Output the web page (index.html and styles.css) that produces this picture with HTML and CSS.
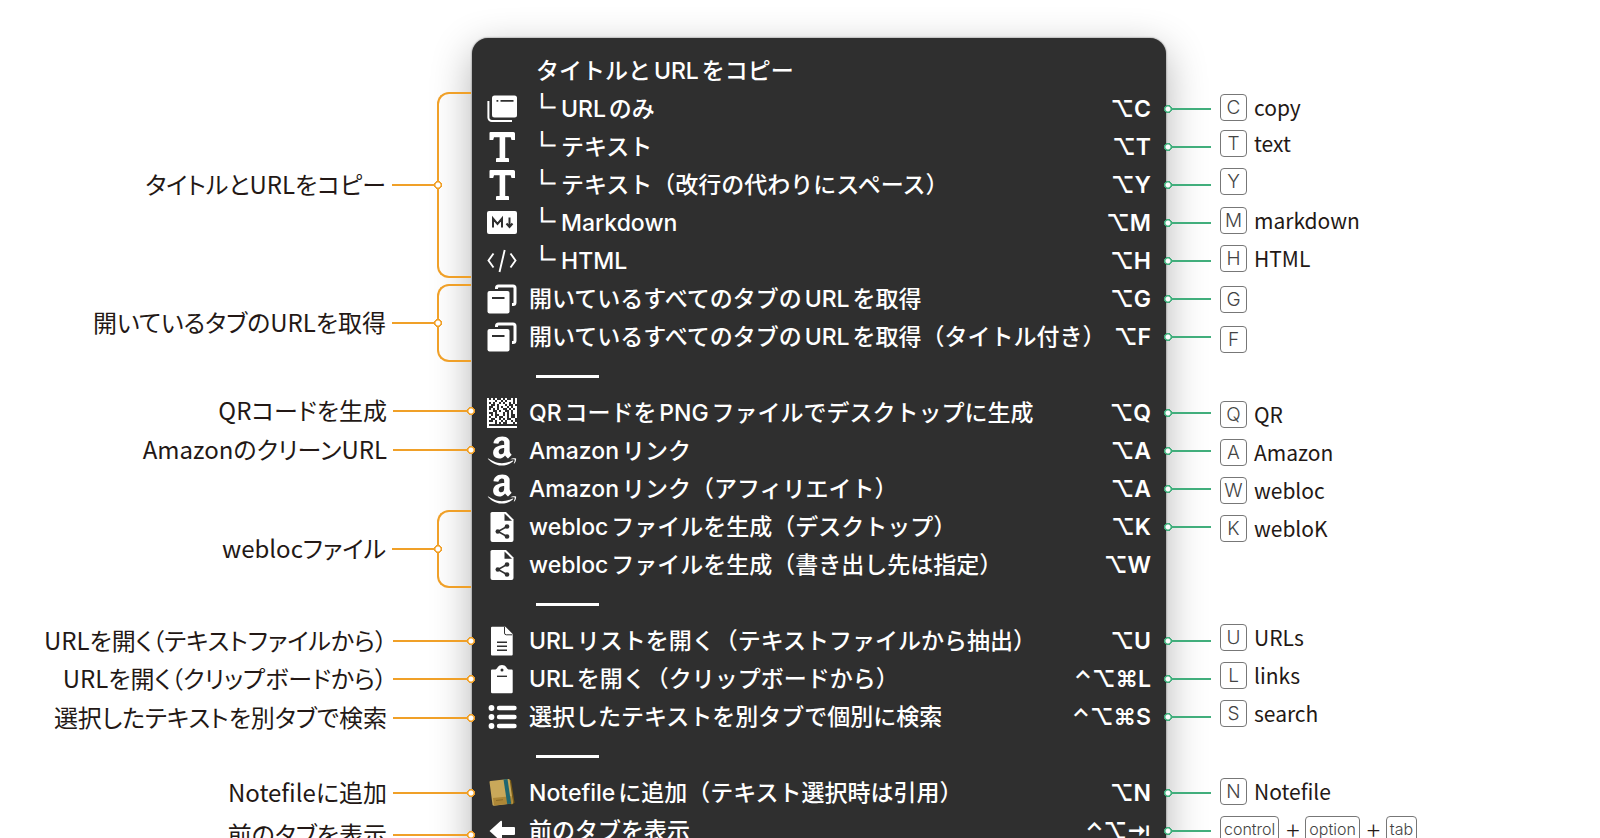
FILE: index.html
```html
<!DOCTYPE html>
<html lang="ja">
<head>
    <meta charset="UTF-8">
    <meta name="viewport" content="width=device-width, initial-scale=1.0">
    <title>ショートカット一覧</title>
    <link rel="stylesheet" href="styles.css">
</head>
<body>
    <!-- Shared icons -->
    <svg class="sprite" aria-hidden="true">
        <symbol id="icon-window" viewBox="0 0 30 30">
            <path d="M1.400 7v16.500a3.500 3.500 0 0 0 3.500 3.500H25" fill="none" stroke="#fff" stroke-width="2"/>
            <rect x="5" y="1.500" width="25" height="22" rx="2.500" fill="#fff"/>
            <path d="M9.500 6.800h1.800M13.500 6.800h13" stroke="#2f2f2f" stroke-width="1.700"/>
        </symbol>
        <symbol id="icon-text" viewBox="0 0 30 30">
            <path d="M3.500 0h23q1.500 0 1.500 1.500V8h-3.500l-.8-2.700h-5.500V26H21q1 0 1 1v3H9v-3q0-1 1-1h2.600V5.300H7L6.200 8H2.500V1Q2.500 0 3.500 0z" fill="#fff"/>
        </symbol>
        <symbol id="icon-markdown" viewBox="0 0 30 30">
            <rect x="0" y="3" width="30" height="23" rx="2" fill="#fff"/>
            <path d="M6 19.500v-9l4.500 5.500 4.500-5.500v9M22.500 9.500V18M19.500 15.500l3 3.500 3-3.500" fill="none" stroke="#2f2f2f" stroke-width="2"/>
        </symbol>
        <symbol id="icon-code" viewBox="0 0 30 30">
            <path d="M6.500 7.500 1.500 14.500l5 7M23.500 7.500l5 7-5 7M17.700 4l-5.200 22" fill="none" stroke="#fff" stroke-width="1.900"/>
        </symbol>
        <symbol id="icon-tabs" viewBox="0 0 30 30">
            <path d="M9.500 5V4q0-2 2-2H26q2 0 2 2v14.500q0 2-2 2h-1" fill="none" stroke="#fff" stroke-width="3"/>
            <rect x=".5" y="7" width="22" height="22.500" rx="2" fill="#fff"/>
            <path d="M5 14h12.500" stroke="#2f2f2f" stroke-width="2"/>
        </symbol>
        <symbol id="icon-qr" viewBox="0 0 30 30">
            <path d="M1 0v29h29" fill="none" stroke="#fff" stroke-width="2"/>
            <g stroke="#fff" stroke-width="2">
                <path d="M4 1h26" stroke-dasharray="2 2 2 4"/>
                <path d="M2 3h28" stroke-dasharray="6 2 4 2 2 2"/>
                <path d="M4 5h26" stroke-dasharray="2 2 4 2"/>
                <path d="M2 7h28" stroke-dasharray="2 4 2 2 6 2"/>
                <path d="M6 9h24" stroke-dasharray="4 2 2 2"/>
                <path d="M4 11h26" stroke-dasharray="2 2 2 2 4 4"/>
                <path d="M2 13h28" stroke-dasharray="4 4 2 2"/>
                <path d="M6 15h24" stroke-dasharray="2 2 6 2 2 2"/>
                <path d="M2 17h28" stroke-dasharray="2 2 2 4 4 2"/>
                <path d="M4 19h26" stroke-dasharray="4 2 2 4"/>
                <path d="M2 21h28" stroke-dasharray="2 4 4 2 2 2"/>
                <path d="M6 23h24" stroke-dasharray="2 2 4 2"/>
                <path d="M2 25h28" stroke-dasharray="6 2 2 2 2 4"/>
            </g>
        </symbol>
        <symbol id="icon-amazon" viewBox="0 26 448 460">
            <path d="M257.200 162.700c-48.700 1.800-169.500 15.500-169.500 117.500 0 109.500 138.300 114 183.500 43.200 6.500 10.200 35.400 37.500 45.300 46.800l56.800-56S341 288.900 341 261.400V114.300C341 89 316.500 32 228.700 32 140.700 32 94 87 94 136.300l73.500 6.800c16.300-49.500 54.200-49.500 54.200-49.500 40.700-.1 35.500 29.800 35.500 69.100zm0 86.800c0 80-84.200 68-84.200 17.200 0-47.200 50.500-56.700 84.200-57.800v40.600zm136 163.500c-7.700 10-70 67-174.500 67S34.200 408.500 9.700 379c-6.800-7.700 1-11.300 5.500-8.300C88.500 415.200 203 488.500 387.700 401c7.500-3.700 13.300 2 5.500 12zm39.800 2.200c-6.500 15.800-16 26.800-21.200 31-5.500 4.500-9.500 2.700-6.500-3.800s19.300-46.500 12.700-55c-6.500-8.300-37-4.300-48-3.200-10.800 1-13 2-14-.3-2.300-5.700 21.700-15.500 37.500-17.500 15.700-1.800 41-.8 46 5.700 3.700 5.100 0 27.100-6.500 43.100z" fill="#fff"/>
        </symbol>
        <symbol id="icon-share" viewBox="0 0 30 30">
            <path d="M5 0h14l7.500 7.500V28q0 2-2 2H5.500q-2 0-2-2V1.500Q3.500 0 5 0z" fill="#fff"/>
            <path d="M17.500 1.500v7.300h7.500z" fill="#2f2f2f"/>
            <path d="M20 14.500 11 19.500l9 5" fill="none" stroke="#2f2f2f" stroke-width="1.500"/>
            <g fill="#2f2f2f"><circle cx="20" cy="14.500" r="2.300"/><circle cx="10.800" cy="19.500" r="2.300"/><circle cx="20" cy="24.500" r="2.300"/></g>
        </symbol>
        <symbol id="icon-file" viewBox="0 0 30 30">
            <path d="M5 .7h13.500L25.700 8v20.500q0 1-1 1H5q-1 0-1-1V1.700q0-1 1-1z" fill="#fff"/>
            <path d="M17.500 1v6q0 1.800 1.800 1.800h6" fill="none" stroke="#2f2f2f" stroke-width="1"/>
            <path d="M10 16.200h10M10 20.200h10M10 24.200h10" stroke="#2f2f2f" stroke-width="1.500"/>
        </symbol>
        <symbol id="icon-clipboard" viewBox="0 0 30 30">
            <path d="M5 5.500h3.500Q10 4.800 11 2.800 12 1 15 1t4 1.800q1 2 2.500 2.700h3.200q1 0 1 1V28q0 1.300-1.300 1.300H5.300Q4 29.300 4 28V6.500q0-1 1-1z" fill="#fff"/>
            <circle cx="15" cy="6" r="1.500" fill="#2f2f2f"/>
            <path d="M10 12.300h10" stroke="#2f2f2f" stroke-width="1.400"/>
        </symbol>
        <symbol id="icon-list" viewBox="0 0 30 30">
            <g fill="#fff">
                <circle cx="4.500" cy="6" r="2.900"/><circle cx="4.500" cy="15" r="2.900"/><circle cx="4.500" cy="24" r="2.900"/>
            </g>
            <path d="M12 6h15.500M12 15h15.500M12 24h15.500" stroke="#fff" stroke-width="4.400" stroke-linecap="round"/>
        </symbol>
        <symbol id="icon-book" viewBox="0 0 30 30">
            <path d="M22 1.500l2 .8 3.500 22.500-3 2.200z" fill="#7a5c17"/>
            <path d="M3.500 3 21.500 1q1 0 1.200 1L26 25.500 7 27.700q-1.300 0-1.500-1L2.500 4q0-.9 1-1z" fill="#c9a85a"/>
            <path d="M6 20l18.500-2 1.200 7.500L7 27.600z" fill="#ad8737"/>
            <path d="M16.500 1.600l4-.5 3.700 24.600-4 .4z" fill="#1f6670"/>
            <path d="M9 22.500l7-.8" stroke="#8d6b27"/>
        </symbol>
        <symbol id="icon-back" viewBox="0 0 30 30">
            <path d="M2.500 15 13.500 5q1.500-1 1.500 1v5h12q1 0 1 1v6q0 1-1 1H15v5q0 2-1.500 1z" fill="#fff"/>
        </symbol>
    </svg>

    <main class="sheet">
        <!-- Left Section: descriptions -->
        <ul class="notes">
            <li class="note group r1"><span>タイトルとURLをコピー</span></li>
            <li class="note group r2"><span>開いているタブのURLを取得</span></li>
            <li class="note r3"><span>QRコードを生成</span></li>
            <li class="note r4"><span>AmazonのクリーンURL</span></li>
            <li class="note group r5"><span>weblocファイル</span></li>
            <li class="note r6"><span>URLを開く（テキストファイルから）</span></li>
            <li class="note r7"><span>URLを開く（クリップボードから）</span></li>
            <li class="note r8"><span>選択したテキストを別タブで検索</span></li>
            <li class="note r9"><span>Notefileに追加</span></li>
            <li class="note r10"><span>前のタブを表示</span></li>
        </ul>

        <!-- Menu -->
        <ul class="menu">
            <li><button class="item heading" type="button"><span class="label">タイトルとURLをコピー</span></button></li>
            <li><button class="item" type="button"><svg class="icon"><use href="#icon-window"/></svg><span class="label"><span class="branch">└</span>URLのみ</span><kbd>⌥C</kbd></button></li>
            <li><button class="item" type="button"><svg class="icon"><use href="#icon-text"/></svg><span class="label"><span class="branch">└</span>テキスト</span><kbd>⌥T</kbd></button></li>
            <li><button class="item" type="button"><svg class="icon"><use href="#icon-text"/></svg><span class="label"><span class="branch">└</span>テキスト（改行の代わりにスペース）</span><kbd>⌥Y</kbd></button></li>
            <li><button class="item" type="button"><svg class="icon"><use href="#icon-markdown"/></svg><span class="label"><span class="branch">└</span>Markdown</span><kbd>⌥M</kbd></button></li>
            <li><button class="item" type="button"><svg class="icon"><use href="#icon-code"/></svg><span class="label"><span class="branch">└</span>HTML</span><kbd>⌥H</kbd></button></li>
            <li><button class="item" type="button"><svg class="icon"><use href="#icon-tabs"/></svg><span class="label">開いているすべてのタブのURLを取得</span><kbd>⌥G</kbd></button></li>
            <li><button class="item" type="button"><svg class="icon"><use href="#icon-tabs"/></svg><span class="label">開いているすべてのタブのURLを取得（タイトル付き）</span><kbd>⌥F</kbd></button></li>
            <li class="separator"><hr></li>
            <li><button class="item" type="button"><svg class="icon"><use href="#icon-qr"/></svg><span class="label">QRコードをPNGファイルでデスクトップに生成</span><kbd>⌥Q</kbd></button></li>
            <li><button class="item" type="button"><svg class="icon"><use href="#icon-amazon"/></svg><span class="label">Amazonリンク</span><kbd>⌥A</kbd></button></li>
            <li><button class="item" type="button"><svg class="icon"><use href="#icon-amazon"/></svg><span class="label">Amazonリンク（アフィリエイト）</span><kbd>⌥A</kbd></button></li>
            <li><button class="item" type="button"><svg class="icon"><use href="#icon-share"/></svg><span class="label">weblocファイルを生成（デスクトップ）</span><kbd>⌥K</kbd></button></li>
            <li><button class="item" type="button"><svg class="icon"><use href="#icon-share"/></svg><span class="label">weblocファイルを生成（書き出し先は指定）</span><kbd>⌥W</kbd></button></li>
            <li class="separator"><hr></li>
            <li><button class="item" type="button"><svg class="icon"><use href="#icon-file"/></svg><span class="label">URLリストを開く（テキストファイルから抽出）</span><kbd>⌥U</kbd></button></li>
            <li><button class="item" type="button"><svg class="icon"><use href="#icon-clipboard"/></svg><span class="label">URLを開く（クリップボードから）</span><kbd>⌃⌥⌘L</kbd></button></li>
            <li><button class="item" type="button"><svg class="icon"><use href="#icon-list"/></svg><span class="label">選択したテキストを別タブで個別に検索</span><kbd>⌃⌥⌘S</kbd></button></li>
            <li class="separator"><hr></li>
            <li><button class="item" type="button"><svg class="icon"><use href="#icon-book"/></svg><span class="label">Notefileに追加（テキスト選択時は引用）</span><kbd>⌥N</kbd></button></li>
            <li><button class="item" type="button"><svg class="icon"><use href="#icon-back"/></svg><span class="label">前のタブを表示</span><kbd>⌃⌥⇥</kbd></button></li>
        </ul>

        <!-- Right Section: key hints -->
        <div class="hints">
            <div class="pins">
                <i class="pin"></i><i class="pin"></i><i class="pin"></i><i class="pin"></i>
                <i class="pin"></i><i class="pin"></i><i class="pin"></i><i></i>
                <i class="pin"></i><i class="pin"></i><i class="pin"></i><i class="pin"></i>
                <i></i><i></i>
                <i class="pin"></i><i class="pin"></i><i class="pin"></i><i></i>
                <i class="pin"></i><i class="pin"></i>
            </div>
            <ul class="keys">
                <li class="k1"><kbd>C</kbd>copy</li>
                <li class="k2"><kbd>T</kbd>text</li>
                <li class="k3"><kbd>Y</kbd></li>
                <li class="k4"><kbd>M</kbd>markdown</li>
                <li class="k5"><kbd>H</kbd>HTML</li>
                <li class="k6"><kbd>G</kbd></li>
                <li class="k7"><kbd>F</kbd></li>
                <li class="k8"><kbd>Q</kbd>QR</li>
                <li class="k9"><kbd>A</kbd>Amazon</li>
                <li class="k10"><kbd>W</kbd>webloc</li>
                <li class="k11"><kbd>K</kbd>webloK</li>
                <li class="k12"><kbd>U</kbd>URLs</li>
                <li class="k13"><kbd>L</kbd>links</li>
                <li class="k14"><kbd>S</kbd>search</li>
                <li class="k15"><kbd>N</kbd>Notefile</li>
                <li class="k16 combo"><kbd>control</kbd><span class="plus">+</span><kbd>option</kbd><span class="plus">+</span><kbd>tab</kbd></li>
            </ul>
        </div>
    </main>
</body>
</html>
```
FILE: styles.css
```css
* {
    box-sizing: border-box;
}
body {
    margin: 0;
    background-color: #fff;
    color: #231815;
    font-family: "Noto Sans CJK JP", sans-serif;
    font-size: 24px;
}
ul {
    list-style: none;
    margin: 0;
    padding: 0;
}
.sprite {
    display: none;
}
.sheet {
    display: grid;
    grid-template-columns: minmax(0, 472fr) minmax(0, 694fr) minmax(0, 434fr);
    align-items: start;
    height: 100vh;
    overflow: hidden;
}

/* Left descriptions */
.notes {
    position: relative;
    z-index: 1;
    display: grid;
    grid-template-rows: 186px 6px 78px 30px 38px 40px 40px 78px 34px 38px 38px 40px 36px 38px 46px;
    padding-top: 92px;
    font-feature-settings: "palt";
}
.note {
    display: grid;
    grid-template-columns: 1fr 82px;
    column-gap: 6px;
    align-items: center;
    margin-right: -3px;
    line-height: 30px;
    text-align: right;
    white-space: nowrap;
}
.note span {
    padding-bottom: 2px;
}
.note::after {
    content: "";
    height: 8px;
    background:
        radial-gradient(circle at calc(100% - 4px) 4px, #fff 2px, #f0a028 3px, #f0a028 4px, transparent 4px),
        linear-gradient(#f0a028, #f0a028) 0 3px / 76px 2px no-repeat;
}
.note.group {
    grid-template-columns: 1fr 50px 29px;
    column-gap: 0;
    margin-right: 1px;
}
.note.group span {
    padding-right: 6px;
}
.note.group::before {
    content: "";
    grid-column: 3;
    grid-row: 1;
    align-self: stretch;
    margin-left: -5px;
    border: 2px solid #f0a028;
    border-right: 0;
    border-radius: 12px 0 0 12px;
}
.note.group::after {
    grid-column: 2;
    grid-row: 1;
    z-index: 1;
    background:
        radial-gradient(circle at calc(100% - 4px) 4px, #fff 2px, #f0a028 3px, #f0a028 4px, transparent 4px),
        linear-gradient(#f0a028, #f0a028) 0 3px / 43px 2px no-repeat;
}
.r1 { grid-row: 1; }
.r2 { grid-row: 3; }
.r3 { grid-row: 5; }
.r4 { grid-row: 6; }
.r5 { grid-row: 8; }
.r6 { grid-row: 10; }
.r7 { grid-row: 11; }
.r8 { grid-row: 12; }
.r9 { grid-row: 14; }
.r10 { grid-row: 15; }

/* Menu */
.menu {
    margin-top: 38px;
    padding: 14px 15px;
    background-color: #2f2f2f;
    border-radius: 16px;
    box-shadow: 0 0 2px rgba(0, 0, 0, 0.6), 0 12px 40px rgba(0, 0, 0, 0.3);
}
.item {
    display: flex;
    align-items: center;
    gap: 12px;
    width: 100%;
    height: 38px;
    padding: 0;
    border: 0;
    background: none;
    color: #fff;
    font-family: Inter, "Noto Sans CJK JP", sans-serif;
    font-size: 23px;
    font-weight: 500;
    line-height: 30px;
    text-align: left;
    text-autospace: normal;
    white-space: nowrap;
}
.heading {
    padding-left: 49px;
}
.icon {
    flex: none;
    width: 30px;
    height: 30px;
}
.label {
    flex: 1;
    min-width: 0;
}
.branch {
    display: inline-block;
    width: 32px;
    font-family: "Noto Sans CJK JP", sans-serif;
    font-size: 26px;
    font-weight: 700;
    line-height: 24px;
    -webkit-text-stroke: 1px #fff;
}
.item kbd {
    font-family: Inter, "DejaVu Sans", sans-serif;
    font-size: 23px;
    font-weight: 600;
}
.separator {
    display: flex;
    align-items: center;
    height: 38px;
    padding-top: 3px;
    padding-left: 49px;
}
.separator hr {
    width: 63px;
    height: 3px;
    margin: 0;
    border: 0;
    background-color: #fff;
}

/* Right hints */
.hints {
    display: flex;
    gap: 9px;
}
.pins {
    display: flex;
    flex-direction: column;
    width: 47px;
    margin-left: -2px;
    padding-top: 90px;
}
.pins i {
    height: 38px;
}
.pin {
    background:
        radial-gradient(circle at 4px 19px, #fff 2px, #41ae7c 3px, #41ae7c 4px, transparent 4px),
        linear-gradient(#41ae7c, #41ae7c) 7px 18px / 40px 2px no-repeat;
}
.keys {
    display: grid;
    grid-template-rows: 36px 36px 40px 38px 38px 44px 36px 38px repeat(4, 38px) 71px repeat(3, 38px) 40px 38px 38px;
    padding-top: 89px;
    font-size: 21px;
}
.keys li {
    display: flex;
    align-items: center;
    gap: 7px;
    line-height: 28px;
}
.keys kbd {
    min-width: 27px;
    height: 27px;
    padding: 0 3px;
    border: 1px solid #777;
    border-radius: 4px;
    color: #444;
    font-family: Inter, sans-serif;
    font-size: 19px;
    font-weight: 300;
    line-height: 25px;
    text-align: center;
}
.keys .combo kbd {
    font-size: 16px;
}
.plus {
    width: 12px;
    font-size: 25px;
    font-weight: 300;
    text-align: center;
}
.k1 { grid-row: 1; }
.k2 { grid-row: 2; }
.k3 { grid-row: 3; }
.k4 { grid-row: 4; }
.k5 { grid-row: 5; }
.k6 { grid-row: 6; }
.k7 { grid-row: 7; }
.k8 { grid-row: 9; }
.k9 { grid-row: 10; }
.k10 { grid-row: 11; }
.k11 { grid-row: 12; }
.k12 { grid-row: 14; }
.k13 { grid-row: 15; }
.k14 { grid-row: 16; }
.k15 { grid-row: 18; }
.k16 { grid-row: 19; }
```
